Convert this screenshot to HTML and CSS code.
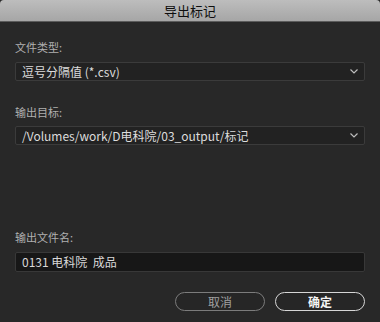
FILE: index.html
```html
<!DOCTYPE html>
<html>
<head>
  <meta charset="utf-8">
  <title>导出标记</title>
  <link rel="stylesheet" href="styles.css">
</head>
<body>
  <div class="dialog">
    <div class="titlebar">导出标记</div>

    <div class="content">
      <div class="label first">文件类型:</div>
      <div class="select">
        <span>逗号分隔值 (*.csv)</span>
        <svg class="chev" width="8" height="5" viewBox="0 0 8 5"><path d="M0.5 0.5 L4 4 L7.5 0.5" fill="none" stroke="#bdbdbd" stroke-width="1.2"/></svg>
      </div>

      <div class="label second">输出目标:</div>
      <div class="select">
        <span>/Volumes/work/D电科院/03_output/标记</span>
        <svg class="chev" width="8" height="5" viewBox="0 0 8 5"><path d="M0.5 0.5 L4 4 L7.5 0.5" fill="none" stroke="#bdbdbd" stroke-width="1.2"/></svg>
      </div>

      <div class="label third">输出文件名:</div>
      <div class="inputbox">0131 电科院&nbsp; 成品</div>

      <div class="buttons">
        <button class="btn cancel">取消</button>
        <button class="btn ok">确定</button>
      </div>
    </div>
  </div>
</body>
</html>
```

FILE: styles.css
```css
*{
    box-sizing: border-box;
}

body{
    margin: 0;
    width: 380px;
    height: 322px;
    background-color: #282828;
    font-family: "Noto Sans CJK SC", "Noto Sans", sans-serif;
}

.dialog{
    display: flex;
    flex-direction: column;
    height: 322px;
    background-color: #282828;
}

.titlebar{
    height: 22px;
    line-height: 21px;
    text-align: center;
    font-size: 13px;
    color: #0e0e0e;
    background: linear-gradient(#bdbdbd, #a6a6a6);
    border-bottom: 1px solid #5c5c5c;
    border-radius: 4px 4px 0 0;
}

.content{
    display: flex;
    flex-direction: column;
    padding: 0 15px;
}

.label{
    font-size: 11px;
    line-height: 14px;
    color: #b0b0b0;
    margin-bottom: 8px;
}
.label.first{ margin-top: 18px; }
.label.second{ margin-top: 24px; margin-bottom: 7px; }
.label.third{ margin-top: 85px; }

.select{
    height: 19px;
    display: flex;
    align-items: center;
    justify-content: space-between;
    padding: 0 5px 0 6px;
    background-color: #222;
    border: 1px solid #3b3b3b;
    border-radius: 2px;
    font-size: 12px;
    color: #dcdcdc;
}

.chev{
    margin-right: 1px;
}

.inputbox{
    height: 20px;
    line-height: 18px;
    padding: 0 6px;
    background-color: #171717;
    border: 1px solid #383838;
    border-radius: 2px;
    font-size: 12px;
    color: #d8d8d8;
}

.buttons{
    display: flex;
    justify-content: flex-end;
    gap: 10px;
    margin-top: 20px;
}

.btn{
    width: 90px;
    height: 19px;
    padding: 0;
    border-radius: 10px;
    background-color: #262626;
    font-family: "Noto Sans CJK SC", sans-serif;
    font-size: 12px;
    line-height: 15px;
}

.cancel{
    border: 1.5px solid #7c7c7c;
    color: #a0a0a0;
}

.ok{
    border: 1.5px solid #d6d6d6;
    color: #f4f4f4;
    font-weight: bold;
}
```
